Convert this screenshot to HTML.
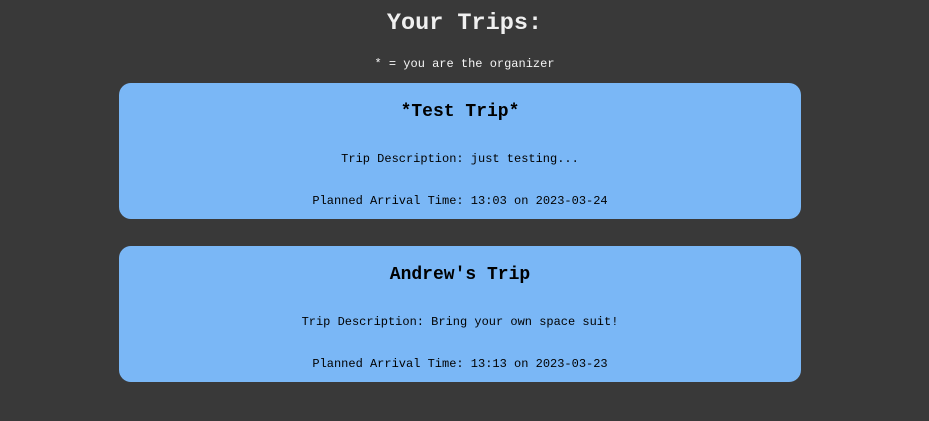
<!DOCTYPE html>
<html><head><style>
body{margin:0;background:#393939;width:929px;height:421px;overflow:hidden;font-family:"Liberation Mono","DejaVu Sans Mono",monospace;}
.h{position:absolute;left:0;width:929px;text-align:center;}
.t{top:10px;font-size:23.5px;font-weight:bold;color:#f0f0f0;}
.s{top:57px;font-size:12px;color:#f5f5f5;}
.c{position:absolute;left:119px;width:682px;height:136px;background:#7ab7f6;border-radius:12px;color:#000;}
.c div{position:absolute;left:0;width:682px;text-align:center;}
.n{top:19px;font-size:18px;font-weight:bold;}
.d{top:69px;font-size:12px;}
.a{top:111px;font-size:12px;}
</style></head><body>
<div class="h t">Your Trips:</div>
<div class="h s">* = you are the organizer</div>
<div class="c" style="top:83px"><div class="n">*Test Trip*</div><div class="d">Trip Description: just testing...</div><div class="a">Planned Arrival Time: 13:03 on 2023-03-24</div></div>
<div class="c" style="top:246px"><div class="n">Andrew's Trip</div><div class="d">Trip Description: Bring your own space suit!</div><div class="a">Planned Arrival Time: 13:13 on 2023-03-23</div></div>
</body></html>
